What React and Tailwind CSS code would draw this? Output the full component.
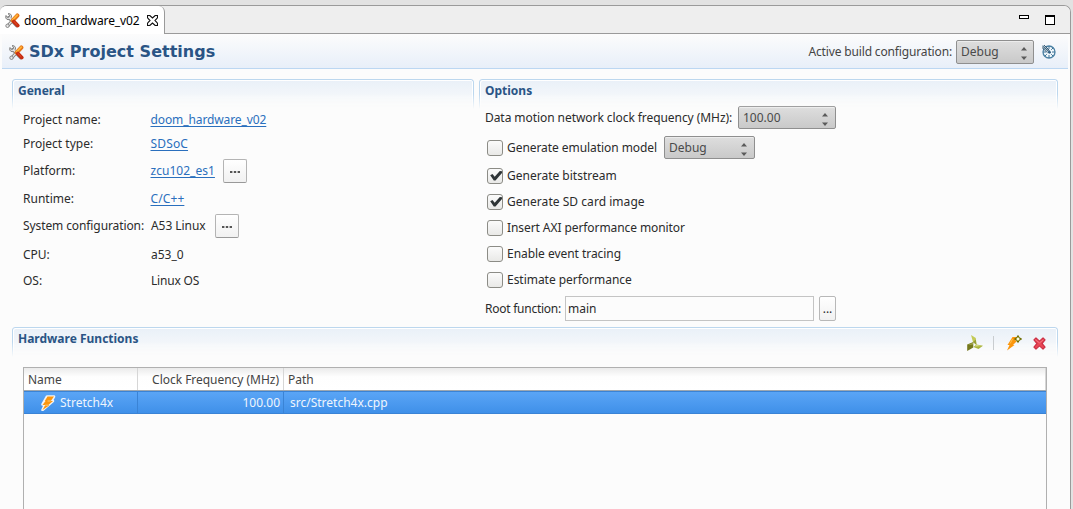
import React from "react";

function Tools({ className }) {
  return (
    <svg viewBox="0 0 15 15" className={className}>
      <path d="M3.500 4.500 11.500 12.800" stroke="#858585" strokeWidth="3" strokeLinecap="round" />
      <path d="M1 2.500 2.500 4.400l1.700-.5L4.500 2 3 .7C5.200.2 7 2 6.500 4L5 6.300 3 6.700C1 6.300.2 4.500 1 2.500Z" fill="#dcdcdc" stroke="#777" strokeWidth=".9" />
      <path d="M4.500 5 7.500 8" stroke="#ececec" strokeWidth="1.500" />
      <path d="M7.500 7.500 3 12.500" stroke="#7d7d7d" strokeWidth="3.200" strokeLinecap="round" />
      <path d="M7.500 7.500 3 12.500" stroke="#e6e6e6" strokeWidth="1.300" strokeLinecap="round" />
      <circle cx="2.500" cy="12.800" r="1.700" fill="#e6e6e6" stroke="#808080" strokeWidth=".9" />
      <path d="m12.300 2.600-4.500 4.800" stroke="#e5761a" strokeWidth="4.200" strokeLinecap="round" />
      <path d="m12.200 2.100-4.600 4.800" stroke="#ffb236" strokeWidth="1.800" strokeLinecap="round" />
      <path d="m8.800 8.500 3.900 4" stroke="#c62c10" strokeWidth="3.800" strokeLinecap="round" />
      <path d="m8.600 8.200 3.700 3.600" stroke="#e8502c" strokeWidth="1" />
    </svg>
  );
}

function Arrows() {
  return (
    <svg viewBox="0 0 6 13" className="mt-[3px] h-[13px] w-[6px]">
      <path d="M0 3.500 3 0l3 3.500ZM0 9.500h6L3 13Z" fill="#5a5a5a" />
    </svg>
  );
}

function Select({ value, className }) {
  return (
    <div className={"flex items-center justify-between rounded-[2px] border border-[#8f8f8f] bg-linear-to-b from-[#dedede] to-[#c9c9c9] pl-1 text-[#4a4a4a] shadow-[inset_0_1px_0_#ececec] " + className}>
      <span>{value}</span>
      <Arrows />
    </div>
  );
}

function MoreButton({ className = "" }) {
  return (
    <button className={"flex h-6 w-6 items-center justify-center rounded-[2px] border border-[#b4b4b4] border-b-[#999] bg-linear-to-b from-white to-[#f1f1f1] " + className}>
      <svg viewBox="0 0 10 2" className="mt-px h-[2px] w-[10px]">
        <path d="M0 0h2.400v2H0zM3.800 0h2.400v2H3.800zM7.600 0H10v2H7.600z" fill="#555" />
      </svg>
    </button>
  );
}

function Check({ label, checked, tracking = "" }) {
  return (
    <div className="flex items-center">
      <span className="ml-[2px] h-4 w-4 shrink-0 rounded-[3px] border border-[#8c8c86] bg-linear-to-b from-[#fbfbfb] to-[#e9e9e7]">
        {checked && (
          <svg viewBox="0 0 14 14" className="h-[14px] w-[14px]">
            <path d="M2.200 6.200 4.500 5 6.700 7.700 11.800 2 14 2.200V4L7.500 11.500H5.800Z" fill="#2e3436" />
          </svg>
        )}
      </span>
      <span className={"ml-1 whitespace-nowrap " + tracking}>{label}</span>
    </div>
  );
}

function Section({ title, className, children, tools }) {
  return (
    <section className={"relative " + className}>
      <div className="pointer-events-none absolute inset-x-0 top-0 h-[30px] rounded-t-[3px] border-x border-t border-[#bcd7ee] bg-linear-to-b from-[#e9f0f8] to-[#fcfcfc] [mask-image:linear-gradient(black_50%,transparent)] shadow-[inset_1px_1px_0_#fff,inset_-1px_0_0_#fff]" />
      <div className="relative flex h-6 items-center justify-between pl-[6px]">
        <h2 className="text-[12px] font-bold text-[#2a5485]">{title}</h2>
        {tools}
      </div>
      {children}
    </section>
  );
}

function Row({ label, height, children, tracking = "" }) {
  return (
    <div className={"flex items-center " + height}>
      <span className={"w-[127px] shrink-0 whitespace-nowrap " + tracking}>{label}</span>
      {children}
    </div>
  );
}

function Link({ children, tracking = "" }) {
  return (
    <a className={"pl-[0.5px] text-[#2a6fbd] underline decoration-1 underline-offset-2 [text-decoration-skip-ink:none] " + tracking}>
      {children}
    </a>
  );
}

function Bolt({ className }) {
  return (
    <svg viewBox="0 0 16 16" className={className}>
      <path d="M7 1.500h7L11.500 6H13L2.500 15 5 9.500H2.500Z" fill="#fff" stroke="#f4f4f4" strokeWidth="2.600" strokeLinejoin="round" />
      <path d="M7.500 1.500H14L10.800 6H13L8 10.200h1.500L2.500 15 5.200 10H2.500L5.500 6H4.800Z" fill="#fb960d" />
      <path d="M10.800 6H7.500M8 10.200H5.200" stroke="#ffd590" strokeWidth=".8" />
    </svg>
  );
}

function HardwareTools() {
  return (
    <div className="mr-3 mt-2 flex items-center">
      <svg viewBox="0 0 16 16" className="h-4 w-4">
        <path d="M4 0 8.800 3 9.500 10 6 7Z" fill="#c4cb58" />
        <path d="M6 7 9.500 10 8.800 4.500Z" fill="#98a034" />
        <path d="M.2 9.500 6.300 7v5.500L.2 16Z" fill="#75791d" />
        <path d="M.7 10 6 7.700v1.800Z" fill="#a5ab4c" />
        <path d="M6.500 12 9.500 9.500 16 10.800 11.500 14Z" fill="#aab43c" />
        <path d="M8 11.500 9.700 10l5 1Z" fill="#dde392" />
      </svg>
      <span className="ml-[10px] mr-[12px] h-[14px] w-px bg-[#c9cdd0]" />
      <svg viewBox="0 0 16 16" className="h-4 w-4">
        <path d="M6.500 2h5L9.500 6H11L7 10h1.500L1 15.500 3.500 10H1.500Z" fill="#fb960d" />
        <path d="M6.500 4 4.200 8.500" fill="none" stroke="#ffc14d" />
        <path d="m12 .8 1.200 2 2 1.200-2 1.200-1.200 2-1.200-2-2-1.200 2-1.200Z" fill="#ffffc4" stroke="#6d6d00" strokeWidth="1.100" />
        <path d="M12 2.800v2.400M10.800 4h2.400" stroke="#fff" strokeWidth=".8" />
      </svg>
      <svg viewBox="0 0 14 14" className="ml-[11px] h-[13px] w-[13px]">
        <path d="m1 3.200 2.200-2.200L7 4.500 10.800 1 13 3.200 9.700 7l3.300 3.800-2.200 2.200L7 9.500 3.200 13 1 10.800 4.300 7Z" fill="#ea4756" stroke="#cc3045" strokeWidth="1.300" strokeLinejoin="round" />
        <path d="m2.500 3 4.500 3.300L11.300 3" fill="none" stroke="#f4808a" strokeWidth=".9" />
      </svg>
    </div>
  );
}

export default function App() {
  return (
    <div className="h-[509px] w-[1073px] overflow-hidden bg-[#e2e2e2] pt-[5px] font-['Noto_Sans',sans-serif] text-[12px] leading-4 text-[#2b2b2b]">
      <div className="flex h-[504px] w-[1071px] flex-col overflow-hidden rounded-t-[7px] border-r border-t border-[#9a9a9a] bg-[#fcfcfc]">
        <div className="flex h-[28px] shrink-0 bg-[#eeeeee]">
          <div className="flex w-[165px] shrink-0 items-center rounded-tr-[6px] border-r border-[#9a9a9a] bg-white pl-[5px] text-black">
            <Tools className="h-[15px] w-[15px]" />
            <span className="ml-1 mt-px w-[123px] whitespace-nowrap tracking-[-0.12px]">doom_hardware_v02</span>
            <svg viewBox="0 0 11 11" className="h-[11px] w-[11px] shrink-0">
              <path d="M.5.5h2.300L5.500 3 8.200.5h2.300v2.300L8 5.500l2.500 2.700v2.300H8.200L5.500 8 2.800 10.500H.5V8.200L3 5.500.5 2.800Z" fill="none" stroke="#111" strokeWidth="1.150" />
            </svg>
          </div>
          <div className="flex flex-1 justify-end border-b border-[#9a9a9a] pr-[15px] pt-[9px]">
            <span className="h-1 w-[10px] border border-black bg-white" />
            <span className="ml-4 h-[10px] w-[10px] border border-t-2 border-black bg-white" />
          </div>
        </div>

        <header className="ml-[2px] mr-[2px] flex h-[35px] shrink-0 items-center border-b border-[#bcd7f2] bg-linear-to-b from-[#fcfcfc] to-[#e8eff9] pl-[7px] pt-[2px]">
          <Tools className="h-[15px] w-[15px]" />
          <h1 className="ml-[5px] flex-1 font-['DejaVu_Sans',sans-serif] text-[16px] font-bold tracking-[0.02px] text-[#2a5485]">SDx Project Settings</h1>
          <span className="mr-1 tracking-[-0.15px] text-[#444]">Active build configuration:</span>
          <Select value="Debug" className="h-6 w-[78px] pr-[6px]" />
          <svg viewBox="0 0 14 14" className="ml-2 mr-[12px] h-[14px] w-[14px]">
            <circle cx="7" cy="7" r="6" fill="#f0f7fb" stroke="#4a80a3" strokeWidth="1.300" />
            <path d="M7 1v3M7 10v3M1 7h3M10 7h3M3 11l1.800-1.800M11 11 9.200 9.200M11 3 9.200 4.800" stroke="#3f7398" />
            <path d="M0 1.500 1.500 0 8.500 6 6.500 8Z" fill="#a9c3d3" />
            <path d="m.5 1 7 6M2 0l5.500 5.500M0 2.500l5.500 5.200" stroke="#2c4d66" strokeWidth=".9" />
            <circle cx="7.500" cy="7.300" r="1.400" fill="#315f83" />
          </svg>
        </header>

        <main className="flex flex-1 flex-col pl-3 pt-[10px]">
          <div className="flex h-[248px] shrink-0 gap-[5px]">
            <Section title="General" className="w-[462px]">
              <div className="pl-[11px] pt-[5px]">
                <Row label="Project name:" height="h-6"><Link tracking="tracking-[-0.1px]">doom_hardware_v02</Link></Row>
                <Row label="Project type:" height="h-6"><Link tracking="tracking-[0.15px]">SDSoC</Link></Row>
                <Row label="Platform:" height="h-[30px]"><Link tracking="tracking-[0.03px]">zcu102_es1</Link><MoreButton className="ml-2" /></Row>
                <Row label="Runtime:" height="h-[26px]"><Link tracking="tracking-[0.1px]">C/C++</Link></Row>
                <Row label="System configuration:" height="h-[28px]" tracking="tracking-[-0.1px]">
                  <span className="ml-px w-[64px] whitespace-nowrap tracking-[-0.05px]">A53 Linux</span><MoreButton />
                </Row>
                <Row label="CPU:" height="h-[29px]"><span className="ml-px">a53_0</span></Row>
                <Row label="OS:" height="h-[24px]"><span className="ml-px tracking-[-0.2px]">Linux OS</span></Row>
              </div>
            </Section>
            <Section title="Options" className="w-[579px]">
              <div className="pl-[6px]">
                <div className="flex h-[29px] items-center">
                  <span className="w-[253px] whitespace-nowrap tracking-[-0.065px]">Data motion network clock frequency (MHz):</span>
                  <Select value="100.00" className="h-[23px] w-[98px] pr-[7px]" />
                </div>
                <div className="flex h-[31px] items-center">
                  <div className="w-[179px]"><Check label="Generate emulation model" tracking="tracking-[-0.06px]" /></div>
                  <Select value="Debug" className="h-[23px] w-[91px] pr-[7px]" />
                </div>
                <div className="grid auto-rows-[26px]">
                  <Check label="Generate bitstream" checked />
                  <Check label="Generate SD card image" checked tracking="tracking-[0.04px]" />
                  <Check label="Insert AXI performance monitor" tracking="tracking-[-0.08px]" />
                  <Check label="Enable event tracing" tracking="tracking-[-0.04px]" />
                  <Check label="Estimate performance" tracking="tracking-[-0.03px]" />
                </div>
                <div className="flex h-[31px] items-center">
                  <span className="w-[80px] whitespace-nowrap tracking-[-0.25px]">Root function:</span>
                  <span className="flex h-[25px] w-[249px] items-center border border-[#c4c4c4] pl-[2px]">main</span>
                  <button className="ml-[5px] flex h-[25px] w-[17px] items-center justify-center rounded-[2px] border border-[#b8b8b8] bg-linear-to-b from-white to-[#f1f1f1]">...</button>
                </div>
              </div>
            </Section>
          </div>

          <Section title="Hardware Functions" className="w-[1046px]" tools={<HardwareTools />}>
            <div className="ml-[11px] mt-4 h-[160px] w-[1024px] border border-[#b0b0b0] bg-[#fcfcfc]">
              <div className="flex h-[23px] items-center border-b border-[#9da7b0] bg-linear-to-b from-[#ebebeb] via-[#fefefe] via-40% to-white text-[#444]">
                <span className="h-full w-[114px] border-r border-[#d6d6d6] pl-1 leading-[23px]">Name</span>
                <span className="h-full w-[146px] border-r border-[#d6d6d6] pr-[4px] text-right leading-[23px] tracking-[-0.03px]">Clock Frequency (MHz)</span>
                <span className="h-full flex-1 border-r border-[#d6d6d6] pl-1 leading-[23px]">Path</span>
              </div>
              <div className="flex h-[23px] items-center border-y border-[#3a83d5] bg-linear-to-b from-[#5aa5f6] to-[#3f90e9] text-[#eef5fd]">
                <span className="flex h-full w-[114px] items-center border-r border-[#3a83d5] pl-4">
                  <Bolt className="h-4 w-4" />
                  <span className="ml-1">Stretch4x</span>
                </span>
                <span className="h-full w-[146px] border-r border-[#3a83d5] pr-[3px] text-right leading-[22px]">100.00</span>
                <span className="pl-[6px]">src/Stretch4x.cpp</span>
              </div>
            </div>
          </Section>
        </main>
      </div>
    </div>
  );
}
